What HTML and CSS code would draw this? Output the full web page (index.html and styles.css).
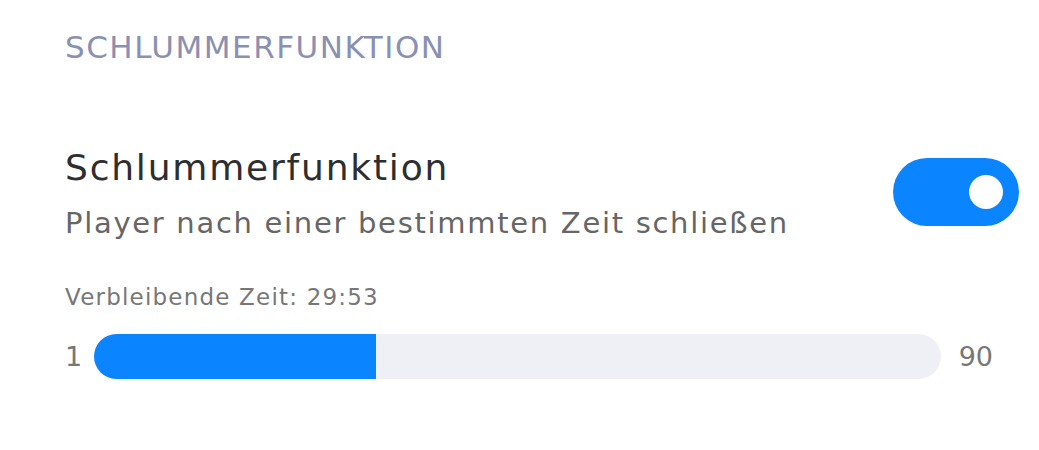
FILE: index.html
```html
<!DOCTYPE html>
<html lang="de">
<head>
<meta charset="utf-8">
<link rel="stylesheet" href="styles.css">
</head>
<body>
<div class="page">
  <div class="section-title">SCHLUMMERFUNKTION</div>
  <div class="setting">
    <div class="texts">
      <div class="title">Schlummerfunktion</div>
      <div class="subtitle">Player nach einer bestimmten Zeit schließen</div>
    </div>
    <div class="toggle"><div class="knob"></div></div>
  </div>
  <div class="remaining">Verbleibende Zeit: 29:53</div>
  <div class="slider-row">
    <span class="min">1</span>
    <div class="track"><div class="fill" style="width: 33.3%"></div></div>
    <span class="max">90</span>
  </div>
</div>
</body>
</html>
```
FILE: styles.css
```css
html, body {
  margin: 0;
  padding: 0;
  background: #ffffff;
}
body {
  font-family: "DejaVu Sans", Inter, sans-serif;
}
.page {
  width: 1039px;
  height: 450px;
  padding: 27px 20px 0 65px;
  box-sizing: border-box;
}
.section-title {
  font-size: 31px;
  line-height: 40px;
  letter-spacing: 1.5px;
  color: #8a90b3;
}
.setting {
  display: flex;
  align-items: flex-start;
  justify-content: space-between;
  margin-top: 79px;
}
.title {
  font-size: 36px;
  line-height: 44px;
  letter-spacing: 1.8px;
  color: #2e2e2e;
}
.subtitle {
  margin-top: 11px;
  font-size: 29px;
  line-height: 44px;
  letter-spacing: 1.7px;
  color: #666666;
}
.toggle {
  width: 126px;
  height: 68px;
  border-radius: 34px;
  background: #0a84ff;
  display: flex;
  align-items: center;
  justify-content: flex-end;
  padding-right: 16px;
  box-sizing: border-box;
  margin-top: 12px;
}
.knob {
  width: 34px;
  height: 34px;
  border-radius: 50%;
  background: #ffffff;
}
.remaining {
  margin-top: 37px;
  font-size: 23px;
  line-height: 30px;
  letter-spacing: 1.2px;
  color: #777777;
}
.slider-row {
  display: flex;
  align-items: center;
  margin-top: 22px;
  width: 928px;
}
.min, .max {
  font-size: 27px;
  color: #777777;
}
.min {
  width: 29px;
}
.max {
  margin-left: 18px;
}
.track {
  flex: 1;
  height: 45px;
  border-radius: 23px;
  background: #eef0f5;
  overflow: hidden;
}
.fill {
  height: 100%;
  background: #0a84ff;
}
```
